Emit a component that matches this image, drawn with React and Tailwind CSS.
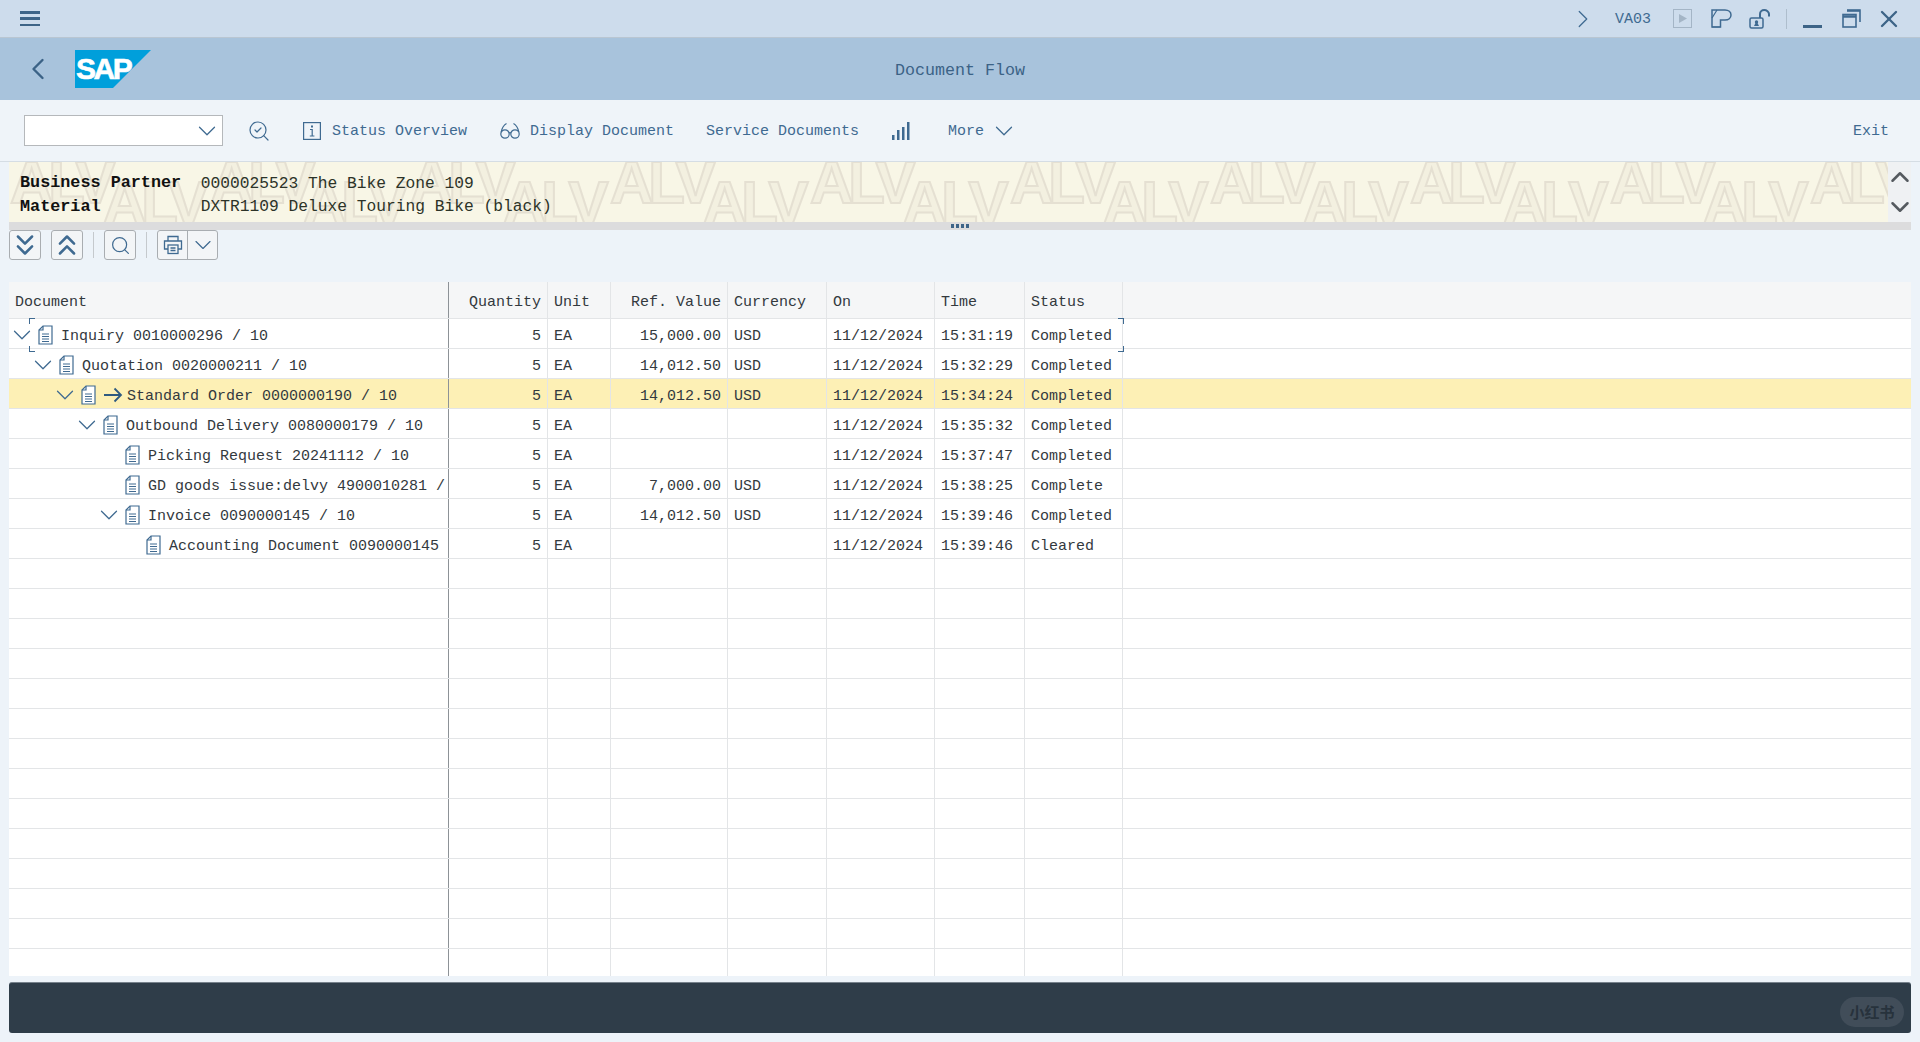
import React from "react";
import { ChevronDown, ChevronLeft, ChevronRight, ChevronUp, ChevronsDown, ChevronsUp, Search, SearchCheck, X } from "lucide-react";

const mono = { fontFamily: '"Liberation Mono", "Noto Sans CJK SC", monospace' };

const ROWS = [
  { doc: "Inquiry 0010000296 / 10", pad: "pl-[5px]", hasChild: true, value: "15,000.00", cur: "USD", on: "11/12/2024", time: "15:31:19", status: "Completed" },
  { doc: "Quotation 0020000211 / 10", pad: "pl-[26px]", hasChild: true, value: "14,012.50", cur: "USD", on: "11/12/2024", time: "15:32:29", status: "Completed" },
  { doc: "Standard Order 0000000190 / 10", pad: "pl-[48px]", hasChild: true, arrow: true, selected: true, value: "14,012.50", cur: "USD", on: "11/12/2024", time: "15:34:24", status: "Completed" },
  { doc: "Outbound Delivery 0080000179 / 10", pad: "pl-[70px]", hasChild: true, value: "", cur: "", on: "11/12/2024", time: "15:35:32", status: "Completed" },
  { doc: "Picking Request 20241112 / 10", pad: "pl-[92px]", value: "", cur: "", on: "11/12/2024", time: "15:37:47", status: "Completed" },
  { doc: "GD goods issue:delvy 4900010281 / 10", pad: "pl-[92px]", value: "7,000.00", cur: "USD", on: "11/12/2024", time: "15:38:25", status: "Complete" },
  { doc: "Invoice 0090000145 / 10", pad: "pl-[92px]", hasChild: true, value: "14,012.50", cur: "USD", on: "11/12/2024", time: "15:39:46", status: "Completed" },
  { doc: "Accounting Document 0090000145", pad: "pl-[113px]", value: "", cur: "", on: "11/12/2024", time: "15:39:46", status: "Cleared" },
];

const EMPTY_ROWS = Array.from({ length: 14 }, (_, i) => i);
const GRID = "grid grid-cols-[440px_99px_63px_117px_99px_108px_90px_98px_1fr]";
const WATERMARK = Array.from({ length: 10 }, (_, i) => i);

const DocIcon = () => (
  <svg width="15" height="20" viewBox="0 0 15 20" fill="none" stroke="#3f6a91" strokeWidth="1.2" className="shrink-0">
    <path d="M5 1h9v18H1V5z" fill="#fff" />
    <path d="M5 1v4H1" />
    <path d="M4 9h7M4 11.5h7M4 14h7M4 16.5h7" strokeWidth="1" />
  </svg>
);

const ArrowIcon = () => (
  <svg width="19" height="16" viewBox="0 0 19 16" fill="none" stroke="#2f5a80" strokeWidth="1.8" className="shrink-0">
    <path d="M0 8h17M10.5 1.5L17 8l-6.5 6.5" />
  </svg>
);

const InfoIcon = () => (
  <svg width="18" height="18" viewBox="0 0 18 18" fill="none" stroke="#3f6a91" strokeWidth="1.2">
    <rect x="0.6" y="0.6" width="16.8" height="16.8" />
    <path d="M7 7.5h2.2V14M6.8 14h4.6" />
    <path d="M8 3.6h2v2H8z" fill="#3f6a91" stroke="none" />
  </svg>
);

const GlassesIcon = () => (
  <svg width="20" height="18" viewBox="0 0 20 18" fill="none" stroke="#3f6a91" strokeWidth="1.2">
    <circle cx="5" cy="12" r="4.2" />
    <circle cx="15" cy="12" r="4.2" />
    <path d="M9 11c.7-.6 1.3-.6 2 0" />
    <path d="M1.2 10C2 6 3.8 3 6.5 1.5M18.8 10C18 6 16.2 3 13.5 1.5" />
  </svg>
);

const BarsIcon = () => (
  <svg width="18" height="18" viewBox="0 0 18 18" fill="#3f6a91">
    <rect x="0" y="13" width="2.5" height="5" />
    <rect x="5" y="8" width="2.5" height="10" />
    <rect x="10" y="5" width="2.5" height="13" />
    <rect x="15" y="0" width="2.5" height="18" />
  </svg>
);

const PlayBox = () => (
  <svg width="19" height="19" viewBox="0 0 19 19" fill="none" stroke="#a4b5c6" strokeWidth="1">
    <rect x="0.5" y="0.5" width="18" height="18" />
    <path d="M6 5l8 4.5L6 14z" fill="#a4b5c6" stroke="none" />
  </svg>
);

const PanelIcon = () => (
  <svg width="21" height="19" viewBox="0 0 21 19" fill="none" stroke="#3f6a91" strokeWidth="1.5">
    <path d="M1 18V1h13c3.5 0 6 2 6 5s-2.500 5-6 5H9.500v7z" />
    <path d="M1 9l5-8M1 18h8.500" strokeWidth="1.200" />
  </svg>
);

const UnlockIcon = () => (
  <svg width="22" height="20" viewBox="0 0 22 20" fill="none" stroke="#3f6a91" strokeWidth="1.500">
    <rect x="1" y="9" width="13" height="10" rx="1.500" />
    <path d="M11 9V5c0-2.200 1.800-4 4.200-4S20 2.800 20 5v2.500" strokeWidth="2" />
    <circle cx="7.500" cy="13" r="1.700" fill="#3f6a91" stroke="none" />
    <path d="M5 17l1.500-3h2l1.500 3z" fill="#3f6a91" stroke="none" />
  </svg>
);

const RestoreIcon = () => (
  <svg width="19" height="19" viewBox="0 0 19 19" fill="none" stroke="#3f6a91" strokeWidth="1.600">
    <rect x="1" y="5.500" width="13" height="12.500" />
    <path d="M1 7.500h13" strokeWidth="2.500" />
    <path d="M5 1h13v12" />
    <path d="M5 1.800h13" strokeWidth="2" />
  </svg>
);

const PrintIcon = () => (
  <svg width="20" height="20" viewBox="0 0 20 20" fill="none" stroke="#3f6a91" strokeWidth="1.300">
    <path d="M5 6V1.500h10V6" />
    <path d="M5 14H1.500V6h17v8H15" />
    <rect x="5" y="10" width="10" height="8.500" fill="#f3f5f7" />
    <path d="M7.500 13h5M7.500 15.500h5" />
  </svg>
);

const SapLogo = () => (
  <svg width="76" height="38" viewBox="0 0 76 38">
    <polygon points="0,0 76,0 38,38 0,38" fill="#009fdb" />
    <text x="1" y="29" fill="#fff" stroke="#fff" strokeWidth="0.6" fontFamily="Liberation Sans" fontWeight="700" fontSize="30" letterSpacing="-2.500">SAP</text>
  </svg>
);

const BarButton = ({ children, className = "" }) => (
  <button className={`flex h-[30px] w-[32px] items-center justify-center rounded-[3px] border border-[#a9adb1] bg-[#f3f5f7] ${className}`}>{children}</button>
);

const Watermark = () => (
  <div className="absolute inset-0 flex pl-[1px] text-[60px] leading-[60px] font-bold tracking-[-5px] text-[#f3f0e0] [font-family:'Liberation_Sans',sans-serif] [-webkit-text-stroke:2px_#e5e0d2]">
    {WATERMARK.map((i) => (
      <React.Fragment key={i}>
        <span className="h-[60px] w-[93px] shrink-0 -translate-y-[9px]">ALV</span>
        <span className="h-[60px] w-[107px] shrink-0 translate-y-[11px]">ALV</span>
      </React.Fragment>
    ))}
  </div>
);

const Cell = ({ children, right, className = "" }) => (
  <div className={`flex items-center overflow-hidden border-r border-[#e3e5e7] pt-[7px] whitespace-nowrap ${right ? "justify-end pr-[6px]" : "pl-[6px]"} ${className}`}>{children}</div>
);

const TreeCell = ({ row }) => (
  <div className={`flex items-center overflow-hidden border-r border-[#8d9297] whitespace-nowrap ${row.pad}`}>
    <span className="mt-[2px] flex w-[16px] shrink-0 justify-center">
      {row.hasChild && <ChevronDown size={30} strokeWidth={1} color="#3f6a91" className="shrink-0" />}
    </span>
    <span className="mt-[2px] ml-[8px] shrink-0">
      <DocIcon />
    </span>
    {row.arrow && (
      <span className="mt-[2px] ml-[8px] shrink-0">
        <ArrowIcon />
      </span>
    )}
    <span className={`mt-[7px] ${row.arrow ? "ml-[4px]" : "ml-[8px]"}`}>{row.doc}</span>
  </div>
);

const App = () => {
  return (
    <div className="flex h-[1042px] w-[1920px] flex-col overflow-hidden bg-[#edf3f9] text-[15px] text-[#33393e]" style={mono}>
      {/* Shell bar */}
      <div className="flex h-[38px] shrink-0 items-center border-b border-[#b9c6d2] bg-[#cddcec] text-[#3f6a91]">
        <div className="ml-[20px] flex h-[15px] w-[20px] flex-col justify-between">
          <span className="h-[2.500px] bg-[#3d6487]" />
          <span className="h-[2.500px] bg-[#3d6487]" />
          <span className="h-[2.500px] bg-[#3d6487]" />
        </div>
        <div className="ml-auto flex items-center">
          <ChevronRight size={30} strokeWidth={1} />
          <span className="mt-[3px] ml-[17px]">VA03</span>
          <span className="ml-[22px] flex"><PlayBox /></span>
          <span className="ml-[19px] flex"><PanelIcon /></span>
          <span className="ml-[17px] flex"><UnlockIcon /></span>
          <span className="ml-[15px] h-[20px] w-px bg-[#aebecd]" />
          <span className="mt-[15px] ml-[16px] h-[3px] w-[19px] bg-[#3d6487]" />
          <span className="ml-[20px] flex"><RestoreIcon /></span>
          <span className="mr-[17px] ml-[14px] flex"><X size={28} strokeWidth={2} color="#3d6487" /></span>
        </div>
      </div>

      {/* Title bar */}
      <div className="relative flex h-[62px] shrink-0 items-center bg-[#a8c3dc] text-[#3b6286]">
        <ChevronLeft size={36} strokeWidth={1.600} className="ml-[20px]" />
        <span className="ml-[19px] flex"><SapLogo /></span>
        <span className="absolute inset-x-0 mt-[2px] text-center text-[16.670px]">Document Flow</span>
      </div>

      {/* Application toolbar */}
      <div className="flex h-[62px] shrink-0 items-center border-b border-[#d5dde4] bg-[#eff4f9] text-[#3f6a91]">
        <div className="ml-[24px] flex h-[31px] w-[199px] items-center justify-end border border-[#b5b8bb] bg-white">
          <ChevronDown size={30} strokeWidth={1} />
        </div>
        <SearchCheck size={24} strokeWidth={1.200} className="ml-[24px]" />
        <span className="ml-[32px] flex"><InfoIcon /></span>
        <span className="mt-[3px] ml-[11px]">Status Overview</span>
        <span className="ml-[33px] flex"><GlassesIcon /></span>
        <span className="mt-[3px] ml-[10px]">Display Document</span>
        <span className="mt-[3px] ml-[32px]">Service Documents</span>
        <span className="ml-[33px] flex"><BarsIcon /></span>
        <span className="mt-[3px] ml-[38px]">More</span>
        <ChevronDown size={30} strokeWidth={1} className="ml-[5px]" />
        <span className="mt-[3px] mr-[31px] ml-auto">Exit</span>
      </div>

      {/* ALV header */}
      <div className="relative mx-[9px] flex h-[60px] shrink-0 overflow-hidden bg-[#f8f6e6]">
        <Watermark />
        <div className="relative mt-[9px] pl-[11px] text-[16.800px] leading-[23.500px] font-bold text-[#111]">
          <div>Business Partner</div>
          <div>Material</div>
        </div>
        <div className="relative mt-[10px] ml-[19.500px] text-[16.250px] leading-[23px] text-[#2c3328]">
          <div>0000025523 The Bike Zone 109</div>
          <div>DXTR1109 Deluxe Touring Bike (black)</div>
        </div>
        <div className="absolute inset-y-0 right-0 flex w-[23px] flex-col items-center justify-between bg-[#eff1f3] text-[#555a5f]">
          <ChevronUp size={30} strokeWidth={2} />
          <ChevronDown size={30} strokeWidth={2} />
        </div>
      </div>

      {/* Sash */}
      <div className="mx-[9px] flex h-[8px] shrink-0 items-center justify-center gap-[1.500px] bg-[#dcdcdd]">
        <span className="h-[4px] w-[3.500px] bg-[#3d6487]" />
        <span className="h-[4px] w-[3.500px] bg-[#3d6487]" />
        <span className="h-[4px] w-[3.500px] bg-[#3d6487]" />
        <span className="h-[4px] w-[3.500px] bg-[#3d6487]" />
      </div>

      {/* ALV toolbar */}
      <div className="mx-[9px] flex shrink-0 items-center text-[#3f6a91]">
        <BarButton><ChevronsDown size={34} strokeWidth={1.800} className="shrink-0" /></BarButton>
        <BarButton className="ml-[10px]"><ChevronsUp size={34} strokeWidth={1.800} className="shrink-0" /></BarButton>
        <span className="ml-[10px] h-[26px] w-px bg-[#c5c9cd]" />
        <BarButton className="ml-[10px]"><Search size={21} strokeWidth={1.400} /></BarButton>
        <span className="ml-[10px] h-[26px] w-px bg-[#c5c9cd]" />
        <div className="ml-[10px] flex h-[30px] w-[61px] rounded-[3px] border border-[#a9adb1] bg-[#f3f5f7]">
          <span className="flex w-[30px] items-center justify-center border-r border-[#a9adb1]"><PrintIcon /></span>
          <span className="flex flex-1 items-center justify-center"><ChevronDown size={28} strokeWidth={1} className="shrink-0" /></span>
        </div>
      </div>

      {/* Tree table */}
      <div className="relative mx-[9px] mt-[22px] h-[694px] shrink-0 overflow-hidden bg-white">
        <div className={`${GRID} h-[37px] border-b border-[#e3e5e7] bg-[#f5f6f7]`}>
          <div className="flex items-center border-r border-[#8d9297] pt-[7px] pl-[6px]">Document</div>
          <Cell right>Quantity</Cell>
          <Cell>Unit</Cell>
          <Cell right>Ref. Value</Cell>
          <Cell>Currency</Cell>
          <Cell>On</Cell>
          <Cell>Time</Cell>
          <Cell>Status</Cell>
          <div />
        </div>
        {ROWS.map((row) => (
          <div key={row.doc} className={`${GRID} h-[30px] border-b border-[#e3e5e7] ${row.selected ? "bg-[#fdf0b5]" : ""}`}>
            <TreeCell row={row} />
            <Cell right>5</Cell>
            <Cell>EA</Cell>
            <Cell right>{row.value}</Cell>
            <Cell>{row.cur}</Cell>
            <Cell>{row.on}</Cell>
            <Cell>{row.time}</Cell>
            <Cell>{row.status}</Cell>
            <div />
          </div>
        ))}
        {EMPTY_ROWS.map((i) => (
          <div key={i} className={`${GRID} h-[30px] border-b border-[#e3e5e7]`}>
            <div className="border-r border-[#8d9297]" />
            <Cell />
            <Cell />
            <Cell />
            <Cell />
            <Cell />
            <Cell />
            <Cell />
            <div />
          </div>
        ))}
        {/* Focus corners on the first row */}
        <span className="absolute top-[36px] left-[20px] h-[6px] w-[6px] border-t border-l border-[#3f6a91]" />
        <span className="absolute top-[64px] left-[20px] h-[6px] w-[6px] border-b border-l border-[#3f6a91]" />
        <span className="absolute top-[36px] left-[1109px] h-[6px] w-[6px] border-t border-r border-[#3f6a91]" />
        <span className="absolute top-[64px] left-[1109px] h-[6px] w-[6px] border-r border-b border-[#3f6a91]" />
      </div>

      {/* Message bar */}
      <div className="mx-[9px] mt-[6px] flex h-[51px] shrink-0 items-end justify-end rounded-[3px] border-t border-[#77828c] bg-[#2f3d49] pr-[7px] pb-[6px]">
        <span className="flex h-[30px] w-[64px] items-center justify-center rounded-full bg-[#414d59] text-[15px] font-bold text-[#27323c] [font-family:'Noto_Sans_CJK_SC',sans-serif]">小红书</span>
      </div>
    </div>
  );
};

export default App;
